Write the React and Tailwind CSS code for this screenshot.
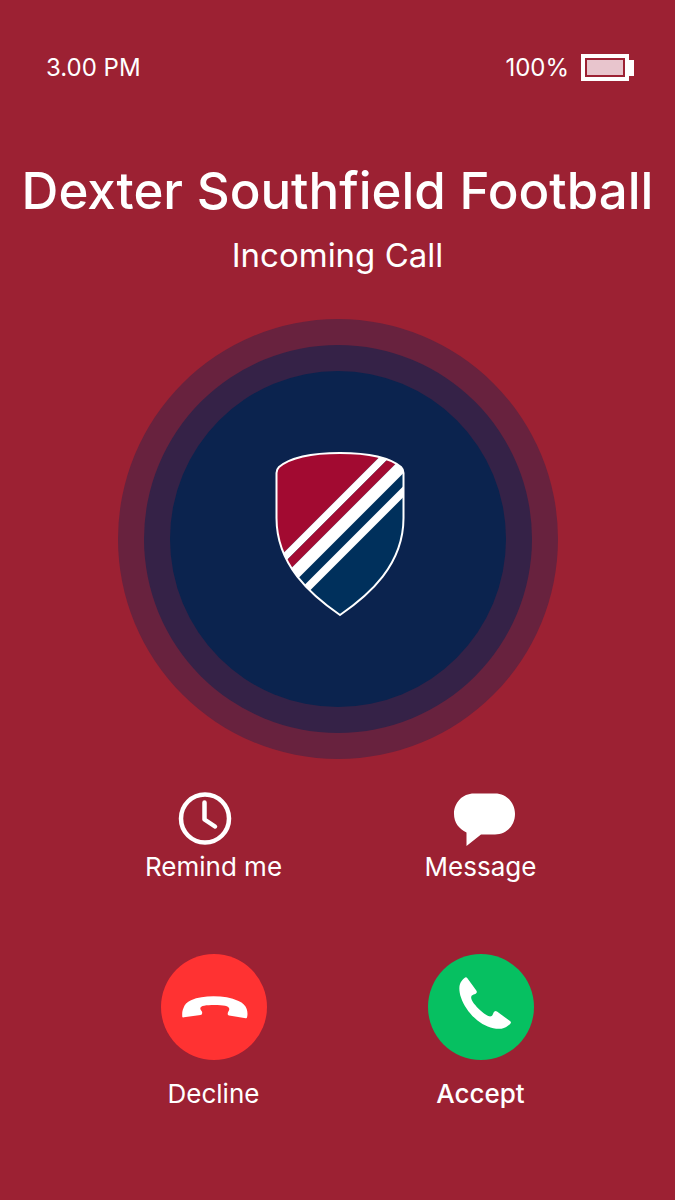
import React from "react";

const Battery = () => (
  <div className="flex items-center">
    <div className="w-12 h-[27px] border-4 border-white p-0.5">
      <div className="w-full h-full bg-[#e8c5cd]" />
    </div>
    <div className="w-[5px] h-4 bg-white" />
  </div>
);

const Shield = () => (
  <svg viewBox="-5 -1 136 176" className="w-[136px] h-[176px]" aria-hidden="true">
    <defs>
      <clipPath id="shield">
        <path d="M1.5 21Q1.5 17.5 4 15C16 5 38 1 65 1C92 1 114 5 126 15Q128.5 17.5 128.5 21V66C128.5 113 94 143 65 163C36 143 1.5 113 1.5 66Z" />
      </clipPath>
    </defs>
    <g clipPath="url(#shield)">
      <rect width="130" height="164" fill="#00305c" />
      <path d="M0 0H109.5L0 109.5Z" fill="#a20a31" />
      <path d="M109.5 0H120L0 120V109.5Z" fill="#fff" />
      <path d="M120 0H132.5L0 132.5V120Z" fill="#a20a31" />
      <path d="M132.5 0H149.500L0 149.500V132.5Z" fill="#fff" />
      <path d="M162.5 0H173.5L0 173.5V162.5Z" fill="#fff" />
    </g>
    <path
      d="M1.5 21Q1.5 17.5 4 15C16 5 38 1 65 1C92 1 114 5 126 15Q128.5 17.5 128.5 21V66C128.5 113 94 143 65 163C36 143 1.5 113 1.5 66Z"
      fill="none"
      stroke="#fff"
      strokeWidth="2"
    />
  </svg>
);

const ClockIcon = () => (
  <svg viewBox="0 0 71 54" className="w-[71px] h-[54px]" fill="none" stroke="#fff" aria-hidden="true">
    <circle cx="27" cy="26.5" r="24" strokeWidth="4.5" />
    <path d="M26.5 10.5V27.5L37 34.5" strokeWidth="4.5" strokeLinecap="round" strokeLinejoin="round" />
  </svg>
);

const MessageIcon = () => (
  <svg viewBox="-8 0 69 54" className="w-[69px] h-[54px]" fill="#fff" aria-hidden="true">
    <path d="M20 1.5H41C52.5 1.5 61 10.5 61 22C61 33.5 52.5 42.5 41 42.5H27L12.5 54V40.5C5 37 0 30.5 0 22C0 10.5 8.5 1.5 20 1.5Z" />
  </svg>
);

const DeclineIcon = () => (
  <svg viewBox="0 0 106 106" className="w-[106px] h-[106px]" aria-hidden="true">
    <circle cx="53" cy="53" r="53" fill="#ff3232" />
    <path
      d="M21.3 63C21 59.5 21.3 56.5 22.3 54.5C23.5 50.5 26 48 30 46.3C36.5 43.3 44 42.3 52.5 42.3C62 42.3 70 43.7 77.5 47C82 49 84.5 51.5 85.7 55C86.7 58 86.7 61 86 63.5Q85.8 64.5 84.7 64.2L68 61.5Q66.5 61.3 66.7 59.7C66.8 57.5 68.3 57 68.3 55C68.3 51.8 62 51 53.5 51C45 51 39.3 51.5 39.3 54.5C39.3 56.3 41 56.5 41.2 58.5Q41.4 60.8 39.5 61L23 63.3Q21.5 63.6 21.3 63Z"
      fill="#fff"
    />
  </svg>
);

const AcceptIcon = () => (
  <svg viewBox="0 0 106 106" className="w-[106px] h-[106px]" aria-hidden="true">
    <circle cx="53" cy="53" r="53" fill="#06c061" />
    <path
      d="M36.5 24Q38 22.6 39.2 24L48.3 36.5Q49.5 38.3 48 39.5C46 40.8 43.7 40.5 43.2 43C42.7 46 47 51.5 52.5 56.5C57 60.5 61 63 63 62.3C65.3 61.5 64.7 59 66.5 57.5Q67.5 56.6 69 57.6L82 67Q83.6 68.3 82.5 69.5C80.5 72 77 74.3 73.5 74.7C65 75.5 56.5 72 49.5 66.5C42.5 61 36 52.5 33 43.5C31.3 38.5 31 34 31.7 31C32.5 28 34.5 25.5 36.5 24Z"
      fill="#fff"
    />
  </svg>
);

const actions = [
  { label: "Remind me", icon: <ClockIcon />, style: "gap-[5px]" },
  { label: "Message", icon: <MessageIcon />, style: "gap-[5px]" },
  { label: "Decline", icon: <DeclineIcon />, style: "gap-[18px]" },
  { label: "Accept", icon: <AcceptIcon />, style: "gap-[18px] font-medium" },
];

const App = () => {
  return (
    <div className="min-h-screen bg-[#9c2133] text-white font-['Inter',sans-serif] pt-[54px] pb-20">
      {/* STATUS BAR */}
      <header className="flex items-center justify-between pl-[46px] pr-[41px] text-[24px] leading-[27px]">
        <span>3.00 PM</span>
        <div className="flex items-center gap-3">
          <span>100%</span>
          <Battery />
        </div>
      </header>

      <main className="flex flex-col items-center">
        {/* CALLER */}
        <h1 className="mt-20 text-[51px] leading-[60px] font-medium whitespace-nowrap">
          Dexter Southfield Football
        </h1>
        <p className="mt-3.5 text-[33px] leading-[40px]">Incoming Call</p>

        <div className="mt-11 rounded-full bg-[#68223e] p-[26px]">
          <div className="rounded-full bg-[#352247] p-[26px]">
            <div className="size-[336px] rounded-full bg-[#0b234e] flex items-center justify-center">
              <Shield />
            </div>
          </div>
        </div>

        {/* ACTIONS */}
        <div className="mt-[33px] w-full pl-20 pr-[61px] grid grid-cols-2 gap-y-[71px]">
          {actions.map((action) => (
            <button
              key={action.label}
              type="button"
              className={`flex flex-col items-center justify-self-center text-[26px] leading-[32px] cursor-pointer ${action.style}`}
            >
              {action.icon}
              {action.label}
            </button>
          ))}
        </div>
      </main>
    </div>
  );
};

export default App;
